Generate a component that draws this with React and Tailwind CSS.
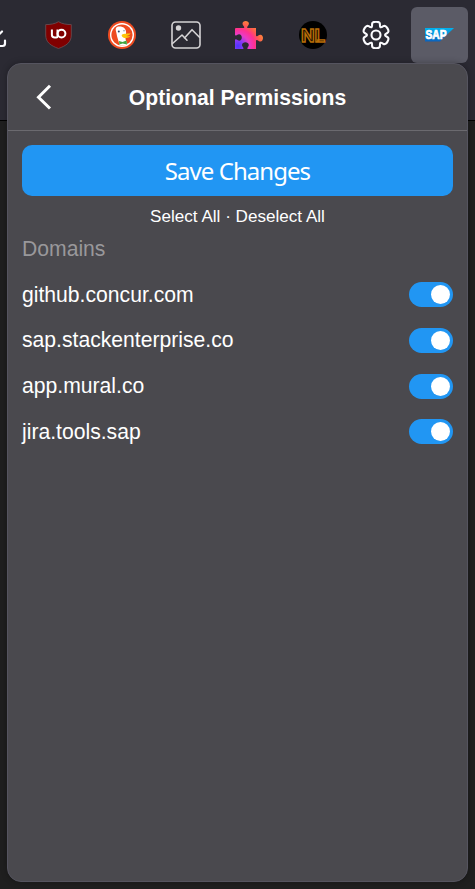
import React from "react";

function DownloadIcon() {
  return (
    <svg width="28" height="28" viewBox="0 0 28 28" fill="none" stroke="#fbfbfe" strokeWidth="2.2" strokeLinecap="round" strokeLinejoin="round">
      <path d="M14 2v16M7 10.500l7 7 7-7M3.500 19.500v3q0 2.500 2.500 2.500h15.500q2.500 0 2.500-2.500v-3" />
    </svg>
  );
}

function ShieldIcon() {
  return (
    <svg width="28" height="28" viewBox="0 0 28 28">
      <path d="M13.500 .7C10 3 5 3.600 .7 3.600V14c0 7.500 5.300 10.800 12.800 13.500 7.500-2.700 12.800-6 12.800-13.500V3.600C22 3.600 17 3 13.500 .7z" fill="#800000" stroke="#6b5055" strokeWidth=".8" />
      <g fill="none" stroke="#fff" strokeWidth="2">
        <path d="M6.900 8.500v5.200q0 2.800 2.800 2.800h1.600q1.200 0 1.200-1.200V8.500" />
        <circle cx="16.500" cy="12.600" r="3.900" />
      </g>
    </svg>
  );
}

function DuckIcon() {
  return (
    <svg width="28" height="28" viewBox="0 0 28 28">
      <circle cx="14" cy="14" r="14" fill="#ee4b20" />
      <circle cx="14" cy="14" r="12" fill="#fff" />
      <circle cx="14" cy="14" r="10.600" fill="#ee4b20" />
      <path d="M7.800 7.500c.7-1.700 2.200-2.200 3.800-2 3.800 0 6.200 2.200 6.500 5.400.2 2-.7 3.200-.7 5 0 3 1.200 5.300 2.200 7.300-2.500 1.400-5.500 1.600-8 .7-1-4.200-2.600-7.500-3.100-11.400-.3-2-1.100-3.700-.7-5z" fill="#fff" />
      <circle cx="10.800" cy="10.500" r="1" fill="#25496f" />
      <circle cx="16" cy="9.800" r=".7" fill="#7189a2" />
      <path d="M13.600 14.200c1-1.700 4.500-1.200 9-1.900-.8 1.900-3 2.500-4.500 2.800 1.500.4 3.100.2 4.300.5-2 2.100-8.400 2.200-8.800-1.400z" fill="#fdc70a" />
      <path d="M11 20l3.500 1.100 4-1.500.5 4-4.300-1-3.400 1z" fill="#43a541" />
    </svg>
  );
}

function ImageIcon() {
  return (
    <svg width="30" height="28" viewBox="0 0 30 28" fill="none" stroke="#d5d3d5" strokeWidth="1.600" strokeLinejoin="round">
      <rect x="1" y="1" width="28" height="26" rx="3.500" />
      <circle cx="7.500" cy="7" r="2.700" fill="#d5d3d5" stroke="none" />
      <path d="M1.500 22.500L11 14l5 5.200M13.500 17l7.500-8.300 7.500 7.500" strokeLinecap="round" />
    </svg>
  );
}

function PuzzleIcon() {
  return (
    <svg width="28" height="28" viewBox="0 0 28 28">
      <defs>
        <radialGradient id="puzzle" gradientUnits="userSpaceOnUse" cx="3" cy="25" r="28">
          <stop offset="0" stopColor="#4b35ff" />
          <stop offset=".2" stopColor="#8a39f5" />
          <stop offset=".4" stopColor="#e83cc8" />
          <stop offset=".6" stopColor="#ff3092" />
          <stop offset=".77" stopColor="#ff5a50" />
          <stop offset="1" stopColor="#ff9134" />
        </radialGradient>
      </defs>
      <path fill="url(#puzzle)" d="M1 7h7.800q1-.2 0-1.700C6.200 2.200 8 0 10.700 0s4.600 2.200 1.900 5.300q-1 1.500 0 1.700H21v7.500q.2 1.400 1.600.4c3.100-2.600 5.400-.7 5.400 2.200s-2.300 4.800-5.400 2.200q-1.400-1-1.600.4V28h-8.200q-1-.2 0-1.700c2.500-3-.2-5-2.400-5s-4.900 2-2.400 5q1 1.500 0 1.700H0v-9q.2-1.400 1.600-.4c3 2.400 5.200.3 5.200-2.200s-2.200-4.600-5.200-2.200q-1.400 1-1.600-.4V8q0-1 1-1z" />
    </svg>
  );
}

function NightIcon() {
  return (
    <svg width="28" height="28" viewBox="0 0 28 28">
      <circle cx="14" cy="14" r="14" fill="#000" />
      <text x="2" y="20.500" fontSize="19" fontWeight="700" fontFamily="Roboto, sans-serif" fill="#241400" stroke="#b66d08" strokeWidth="1.400" textLength="24" lengthAdjust="spacingAndGlyphs">NL</text>
    </svg>
  );
}

// Six teeth, each with two outer and two inner control points [radius, degrees].
const tooth = [[9, -25], [13.900, -17], [13.900, 17], [9, 25]];
const gearPoints = [0, 60, 120, 180, 240, 300].flatMap((turn) =>
  tooth.map(([radius, degrees]) => {
    const angle = ((turn + degrees - 90) * Math.PI) / 180;
    return [14 + radius * Math.cos(angle), 14 + radius * Math.sin(angle)];
  })
);
const middle = (a, b) => [(a[0] + b[0]) / 2, (a[1] + b[1]) / 2];
const gearPath =
  `M${middle(gearPoints[gearPoints.length - 1], gearPoints[0])}` +
  gearPoints.map((point, i) => `Q${point} ${middle(point, gearPoints[(i + 1) % gearPoints.length])}`).join("") +
  "Z";

function GearIcon() {
  return (
    <svg width="28" height="28" viewBox="0 0 28 28" fill="none" stroke="#fbfbfe" strokeWidth="2.100">
      <circle cx="14" cy="14" r="4.500" />
      <path d={gearPath} />
    </svg>
  );
}

function SapIcon() {
  return (
    <svg width="29" height="28" viewBox="0 0 29 28">
      <defs>
        <linearGradient id="sap" x1="0" y1="0" x2="0" y2="1">
          <stop offset="0" stopColor="#00b4f0" />
          <stop offset="1" stopColor="#0b62bd" />
        </linearGradient>
      </defs>
      <path d="M0 7h29L15 20.500H0z" fill="url(#sap)" />
      <text x=".5" y="18.200" fontSize="12" fontWeight="700" fontFamily="Liberation Sans, sans-serif" fill="#fff" stroke="#fff" strokeWidth=".7" textLength="21" lengthAdjust="spacingAndGlyphs">SAP</text>
    </svg>
  );
}

const extensions = [DownloadIcon, ShieldIcon, DuckIcon, ImageIcon, PuzzleIcon, NightIcon, GearIcon];
const domains = ["github.concur.com", "sap.stackenterprise.co", "app.mural.co", "jira.tools.sap"];

function ToolbarButton({ children, active }) {
  return (
    <button className={`flex h-14 w-[57px] shrink-0 items-center justify-center rounded-md ${active ? "bg-[#5b5b66]" : ""}`}>
      {children}
    </button>
  );
}

function PermissionRow({ domain }) {
  return (
    <label className="flex h-[45.700px] items-center justify-between">
      <span className="text-[21.150px] leading-6">{domain}</span>
      <span className="mt-[0.800px] flex h-[25px] w-11 items-center justify-end rounded-full bg-[#2196f3] pr-[3px]">
        <span className="size-[19px] rounded-full bg-white" />
      </span>
    </label>
  );
}

export default function App() {
  return (
    <div className="h-[889px] w-[475px] overflow-hidden bg-[#1f1f1f] font-['Liberation_Sans',Arial,sans-serif] text-white">
      <header className="flex h-[121px] items-start justify-end gap-[6.500px] overflow-hidden border-b border-black bg-[#2b2a33] pt-[7px] pr-[7px]">
        {extensions.map((Icon) => (
          <ToolbarButton key={Icon.name}>
            <Icon />
          </ToolbarButton>
        ))}
        <ToolbarButton active>
          <SapIcon />
        </ToolbarButton>
      </header>
      <main className="relative mx-[7px] -mt-[58px] h-[819px] rounded-[14px] border border-[#55545f] bg-[#4a494e] shadow-[0_0_6px_rgba(0,0,0,0.3)]">
        <div className="grid h-[67px] grid-cols-[70px_1fr_70px] items-center border-b border-[#6b6a6f]">
          <button className="flex pl-7" aria-label="Back">
            <svg width="16" height="26" viewBox="0 0 16 26" fill="none" stroke="#fff" strokeWidth="3">
              <path d="M14 1.800L2.500 13.200 14 24.500" />
            </svg>
          </button>
          <h1 className="pt-0.5 text-center text-[21.150px] leading-6 font-bold">Optional Permissions</h1>
        </div>
        <div className="px-3.5 pt-3.5">
          <button className="flex h-[51px] w-full items-center justify-center rounded-[10px] bg-[#2196f3] pt-px font-['Noto_Sans',sans-serif] text-2xl tracking-[-0.950px]">
            Save Changes
          </button>
          <p className="mt-[9px] text-center text-[17.100px] leading-6">Select All · Deselect All</p>
          <h2 className="mt-2 text-[21.150px] leading-6 text-[#99989b]">Domains</h2>
          <div className="mt-[10.700px]">
            {domains.map((domain) => (
              <PermissionRow key={domain} domain={domain} />
            ))}
          </div>
        </div>
      </main>
    </div>
  );
}
